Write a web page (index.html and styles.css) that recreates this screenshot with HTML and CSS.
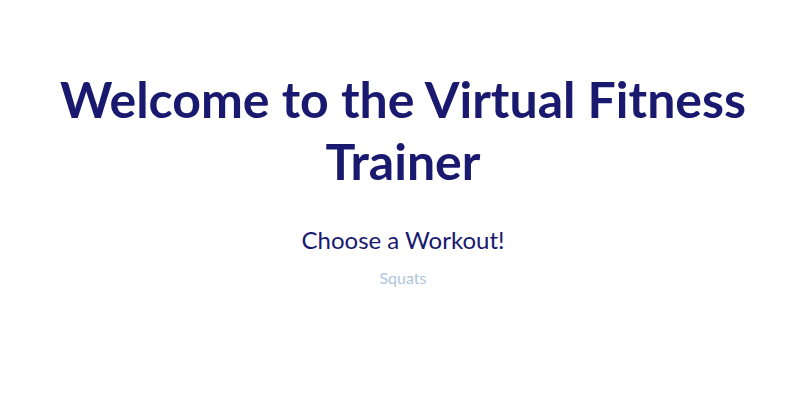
FILE: index.html
```html
<!DOCTYPE html>
<html>
<head>
    <meta charset="UTF-8">
    <title>Virtual Fitness Trainer</title>
    <link rel="stylesheet" href="styles.css">
</head>

<body>
    <div class="container">
        <h1>Welcome to the Virtual Fitness Trainer</h1>
        <h2>Choose a Workout!</h2>
        <div class="workouts">
            <a href="#" class="workout-link">Squats</a>
        </div>
    </div>
</body>

</html>
```

FILE: styles.css
```css
body {
    font-family: Lato, "Open Sans", sans-serif;
    background-color: #ffffff;
    text-align: center;
    color: #191970;
    margin: 0;
}

.container {
    padding: 68px 40px 0;
}

h1 {
    font-size: 50px;
    font-weight: 700;
    line-height: 62px;
    margin: 0 0 33px;
}

h2 {
    font-size: 24px;
    font-weight: 400;
    margin: 0 0 14px;
}

/* Список упражнений */
.workout-link {
    font-size: 16px;
    color: #b0c4de;
    text-decoration: none;
}
```
